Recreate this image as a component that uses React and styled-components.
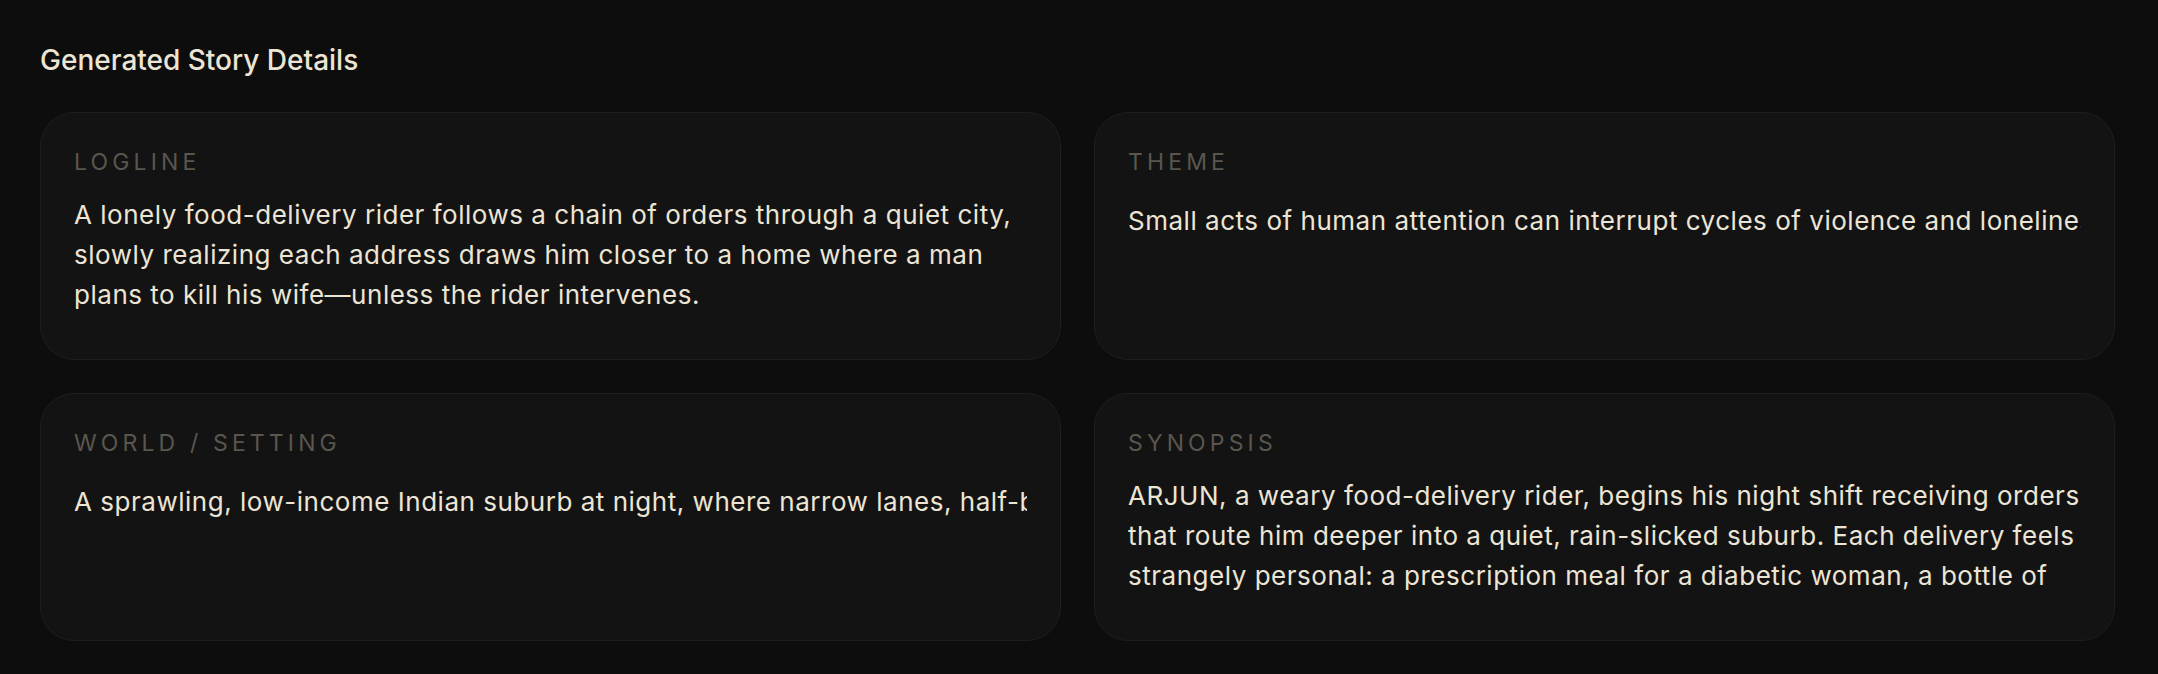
import styled, { createGlobalStyle } from 'styled-components'

const GlobalStyle = createGlobalStyle`
  * {
    box-sizing: border-box;
  }

  body {
    margin: 0;
    background: #0d0d0d;
    font-family: Inter, "Noto Sans", sans-serif;
    color: #ece5d5;
  }
`;

const Page = styled.main`
  min-height: 674px;
  padding: 41px 43px 0 40px;
  background: #0d0d0d;
`;

const Heading = styled.h2`
  margin: 0 0 32px;
  font-size: 28px;
  font-weight: 500;
  line-height: 1.4;
  color: #ece5d5;
`;

const Grid = styled.section`
  display: grid;
  grid-template-columns: 1fr 1fr;
  gap: 33px;
`;

const Card = styled.article`
  height: 248px;
  padding: 33px 33px 31px;
  background: #131313;
  border: 1px solid #1e1e1e;
  border-radius: 34px;
  overflow: hidden;
`;

const Label = styled.div`
  margin-bottom: 16px;
  font-size: 23px;
  line-height: 33px;
  letter-spacing: 0.18em;
  text-transform: uppercase;
  color: #5a564e;
`;

const Body = styled.p`
  margin: 0;
  padding-top: ${p => (p.$single ? '6px' : '0')};
  font-size: 26px;
  line-height: 40px;
  letter-spacing: 0.02em;
  max-height: ${p => (p.$single ? '46px' : '120px')};
  overflow: hidden;
  white-space: ${p => (p.$single ? 'nowrap' : 'normal')};
  color: #ece5d5;
`;

const details = [
  {
    label: 'Logline',
    text: 'A lonely food-delivery rider follows a chain of orders through a quiet city, slowly realizing each address draws him closer to a home where a man plans to kill his wife\u2014unless the rider intervenes.',
  },
  {
    label: 'Theme',
    single: true,
    text: 'Small acts of human attention can interrupt cycles of violence and loneliness.',
  },
  {
    label: 'World / Setting',
    single: true,
    text: 'A sprawling, low-income Indian suburb at night, where narrow lanes, half-built houses and flickering streetlights hide lives behind shut doors.',
  },
  {
    label: 'Synopsis',
    text: 'ARJUN, a weary food-delivery rider, begins his night shift receiving orders that route him deeper into a quiet, rain-slicked suburb. Each delivery feels strangely personal: a prescription meal for a diabetic woman, a bottle of cough syrup for a crying child, a single cake for a man who eats alone.',
  },
]

export default function App() {
  return (
    <>
      <GlobalStyle />
      <Page>
        <Heading>Generated Story Details</Heading>
        <Grid>
          {details.map(d => (
            <Card key={d.label}>
              <Label>{d.label}</Label>
              <Body $single={d.single}>{d.text}</Body>
            </Card>
          ))}
        </Grid>
      </Page>
    </>
  )
}
